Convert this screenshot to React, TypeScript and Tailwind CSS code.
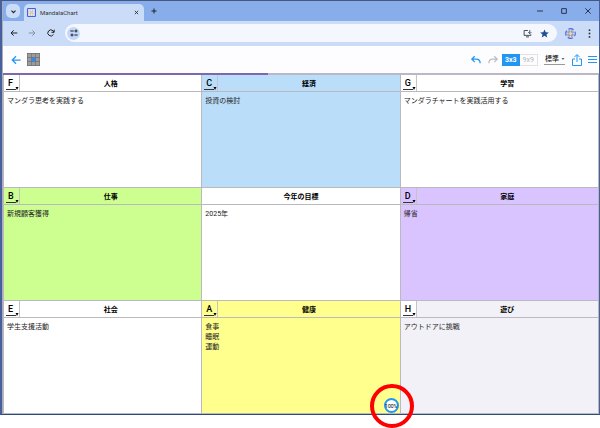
import React from "react";

type Area = {
  letter?: string;
  title: string;
  lines: string[];
  color: string;
  letterColor?: string;
  progress?: string;
};

const LETTERS = ["A", "B", "C", "D", "E", "F", "G", "H"];

const AREAS: Area[] = [
  { letter: "F", title: "人格", lines: ["マンダラ思考を実践する"], color: "bg-white" },
  { letter: "C", title: "経済", lines: ["投資の検討"], color: "bg-[#badefa]" },
  { letter: "G", title: "学習", lines: ["マンダラチャートを実践活用する"], color: "bg-white" },
  { letter: "B", title: "仕事", lines: ["新規顧客獲得"], color: "bg-[#ccff90]" },
  { title: "今年の目標", lines: ["2025年"], color: "bg-white" },
  { letter: "D", title: "家庭", lines: ["帰省"], color: "bg-[#d9c4ff]" },
  { letter: "E", title: "社会", lines: ["学生支援活動"], color: "bg-white" },
  { letter: "A", title: "健康", lines: ["食事", "睡眠", "運動"], color: "bg-[#ffff8d]", progress: "100%" },
  { letter: "H", title: "遊び", lines: ["アウトドアに挑戦"], color: "bg-[#f2f1f8]", letterColor: "bg-white" },
];

type IconProps = { d: string; className: string; width?: number };

function Icon({ d, className, width = 2 }: IconProps) {
  return (
    <svg viewBox="0 0 24 24" fill="none" stroke="currentColor" strokeWidth={width} className={className} aria-hidden="true">
      <path d={d} />
    </svg>
  );
}

function MandalaLogo({ className }: { className: string }) {
  return (
    <svg viewBox="0 0 24 24" className={className} aria-hidden="true">
      <rect x="0" y="0" width="24" height="24" rx="3" fill="#4263e6" />
      <rect x="3" y="3" width="18" height="18" fill="#f2efe9" />
      <path d="M9 3v18M15 3v18M3 9h18M3 15h18" stroke="#b9b4b4" strokeWidth="1.5" />
      <rect x="9.5" y="9.5" width="5" height="5" fill="#e6c9a8" />
    </svg>
  );
}

function TabStrip() {
  return (
    <div className="flex h-5 items-end bg-[#87aeeb]">
      <button aria-label="タブを検索" className="mb-[3px] ml-[3px] flex h-[14px] w-[14px] items-center justify-center rounded-[5px] bg-[#cbdcf8] text-[#222]">
        <Icon d="M5 9l7 7 7-7" className="h-[7px] w-[7px]" width={4} />
      </button>
      <div className="ml-1 flex h-[17px] w-[120px] items-center rounded-t-[5px] bg-[#cbdcf8] pr-1 pl-[3px]">
        <MandalaLogo className="h-[9px] w-[9px]" />
        <span className="ml-1 flex-1 text-[6px] leading-[10px] text-[#333]">MandalaChart</span>
        <button aria-label="タブを閉じる" className="flex h-2 w-2 items-center justify-center text-[#222]">
          <Icon d="M4 4l16 16M20 4L4 20" className="h-[5px] w-[5px]" width={4} />
        </button>
      </div>
      <button aria-label="新しいタブ" className="mb-[6px] ml-[6px] flex h-2 w-2 items-center justify-center text-[#222]">
        <Icon d="M12 2v20M2 12h20" className="h-[6px] w-[6px]" width={4} />
      </button>
      <div className="mb-[6px] ml-auto flex items-center gap-4 pr-[7px] text-[#26344f]">
        <button aria-label="最小化" className="h-2 w-2">
          <Icon d="M3 12h18" className="h-2 w-2" width={3} />
        </button>
        <button aria-label="最大化" className="h-2 w-2">
          <Icon d="M5 5h14v14H5z" className="h-2 w-2" width={3} />
        </button>
        <button aria-label="閉じる" className="h-2 w-2">
          <Icon d="M4 4l16 16M20 4L4 20" className="h-2 w-2" width={3} />
        </button>
      </div>
    </div>
  );
}

function AddressRow() {
  return (
    <div className="flex items-center bg-[#cbdcf8] pt-[3px] pb-1 pl-[7px] text-[#222]">
      <button aria-label="戻る">
        <Icon d="M22 12H4M11 4l-8 8 8 8" className="h-2 w-2" width={3} />
      </button>
      <button aria-label="進む" className="ml-[10px] text-[#8492ad]">
        <Icon d="M2 12h18M13 4l8 8-8 8" className="h-2 w-2" width={3} />
      </button>
      <button aria-label="再読み込み" className="ml-[11px]">
        <Icon d="M19.5 16A9 9 0 1 1 18 5.500L21 9M21.500 2v8h-8" className="h-2 w-2" width={3} />
      </button>
      <div className="ml-[10px] flex h-[18px] flex-1 items-center rounded-full bg-[#f4f8fe] pr-2 pl-[2px]">
        <button aria-label="サイト情報" className="flex h-[13px] w-[13px] items-center justify-center rounded-full bg-[#c3d8f9]">
          <Icon d="M1 6h10M23 18H13M15 6a3 3 0 1 0 6 0a3 3 0 1 0-6 0M3 18a3 3 0 1 0 6 0a3 3 0 1 0-6 0" className="h-2 w-2" width={3} />
        </button>
        <input aria-label="アドレスバー" className="mx-1 h-3 min-w-0 flex-1 bg-transparent text-[7px] outline-none" />
        <button aria-label="インストール" className="text-[#3b4455]">
          <Icon d="M13 4H3v13h18v-3M8 21h8M18 3v9M14 8.500l4 4 4-4" className="h-[9px] w-[9px]" width={2.5} />
        </button>
        <button aria-label="ブックマーク" className="ml-2 text-[#1f4e93]">
          <svg viewBox="0 0 24 24" fill="currentColor" className="h-[9px] w-[9px]" aria-hidden="true">
            <path d="M12 1l3.300 7.500 8.200.7-6.200 5.400 1.900 8L12 18.300 4.800 22.600l1.900-8L.5 9.200l8.200-.7z" />
          </svg>
        </button>
      </div>
      <button aria-label="プロフィール" className="ml-2">
        <svg viewBox="0 0 24 24" className="h-[11px] w-[11px]" aria-hidden="true">
          <circle cx="12" cy="12" r="10" fill="#d3d5dc" />
          <path d="M9 4v16M15 4v16M4 9h16M4 15h16" stroke="#777a84" strokeWidth="1.500" />
          <rect x="9.500" y="9.500" width="5" height="5" fill="#f3e2cc" />
          <circle cx="12" cy="12" r="10.500" fill="none" stroke="#4468ec" strokeWidth="2.500" strokeDasharray="12 4.500" strokeDashoffset="6" />
        </svg>
      </button>
      <button aria-label="メニュー" className="mr-[5px] ml-2 flex w-[10px] justify-center text-[#333]">
        <svg viewBox="0 0 24 24" fill="currentColor" className="h-[9px] w-[9px]" aria-hidden="true">
          <circle cx="12" cy="3" r="2.500" />
          <circle cx="12" cy="12" r="2.500" />
          <circle cx="12" cy="21" r="2.500" />
        </svg>
      </button>
    </div>
  );
}

function AppBar() {
  return (
    <header className="flex h-[27px] items-center bg-[#fdfdff] pr-[2px] pl-2">
      <button aria-label="前の画面" className="text-[#2196f3]">
        <Icon d="M23 12H3M12 3l-9 9 9 9" className="h-[10px] w-[10px]" width={3} />
      </button>
      <button aria-label="マンダラ" className="ml-[6px]">
        <svg viewBox="0 0 39 39" className="h-[13px] w-[13px]" aria-hidden="true">
          <rect width="39" height="39" fill="#707070" />
          <path d="M2 2h10v10H2zM14 2h11v10H14zM27 2h10v10H27zM2 14h10v11H2zM27 14h10v11H27zM2 27h10v10H2zM14 27h11v10H14zM27 27h10v10H27z" fill="#9c9c9c" />
          <rect x="13" y="13" width="13" height="13" fill="#3f87d8" />
        </svg>
      </button>
      <div className="ml-auto flex items-center">
        <button aria-label="元に戻す" className="text-[#2196f3]">
          <Icon d="M9 3L2 10l7 7M2 10h11q9 0 9 10" className="h-[10px] w-[10px]" width={3} />
        </button>
        <button aria-label="やり直す" className="ml-[7px] text-[#bdbdbd]">
          <Icon d="M15 3l7 7-7 7M22 10H11q-9 0-9 10" className="h-[10px] w-[10px]" width={3} />
        </button>
        <div className="ml-1 flex h-3 w-9 text-[7px] leading-[12px]">
          <button className="flex-1 bg-[#2196f3] font-bold text-white">3x3</button>
          <button className="flex-1 border border-l-0 border-[#e2e2e2] leading-[10px] text-[#b5b5b5]">9x9</button>
        </div>
        <div className="relative ml-[6px] w-[21px]">
          <select aria-label="表示" className="block h-[11px] w-full appearance-none border-b border-[#999] bg-transparent pl-[1px] text-[7px] leading-[10px] font-medium text-[#222]">
            <option>標準</option>
          </select>
          <svg viewBox="0 0 6 4" className="pointer-events-none absolute top-1 right-0 h-[2px] w-[4px]" aria-hidden="true">
            <path d="M0 0h6L3 4z" fill="#666" />
          </svg>
        </div>
        <button aria-label="共有" className="ml-[6px] text-[#2196f3]">
          <Icon d="M8 10H3v13h18V10h-5M12 16V2M7 6l5-5 5 5" className="h-3 w-3" />
        </button>
        <button aria-label="メニュー" className="ml-[5px] text-[#2196f3]">
          <Icon d="M0 4h24M0 12h24M0 20h24" className="h-[9px] w-[9px]" width={3} />
        </button>
      </div>
    </header>
  );
}

function LetterSelect({ letter, color }: { letter: string; color: string }) {
  return (
    <div className={`relative w-4 shrink-0 border-r border-[#c3c3c8] pl-[2px] ${color}`}>
      <select
        aria-label="順番"
        defaultValue={letter}
        className="block h-[15px] w-[10px] appearance-none border-b border-[#333] bg-transparent pt-[2px] pl-[2px] text-[9px] leading-[12px] font-medium text-black"
      >
        {LETTERS.map((l) => (
          <option key={l}>{l}</option>
        ))}
      </select>
      <svg viewBox="0 0 4 4" className="pointer-events-none absolute right-0 bottom-[1px] h-[3px] w-[4px]" aria-hidden="true">
        <path d="M0 0h4L2 4z" fill="#000" />
      </svg>
    </div>
  );
}

function AreaCell({ area }: { area: Area }) {
  return (
    <section className={`relative border-t border-r border-[#b9b9bf] ${area.color} ${area.progress ? "z-10" : ""}`}>
      <div className="flex h-[17px] border-b border-[#b9b9bf]">
        {area.letter && <LetterSelect letter={area.letter} color={area.letterColor ?? area.color} />}
        <h2 className="flex-1 text-center text-[7px] leading-[18px] font-bold text-black">{area.title}</h2>
      </div>
      <div className="min-h-[95px] px-[3px] pt-1 text-[7px] leading-[10px] text-[#222]">
        {area.lines.map((line) => (
          <p key={line}>{line}</p>
        ))}
      </div>
      {area.progress && (
        <div className="absolute right-[1px] bottom-0 flex h-[15px] w-[15px] items-center justify-center rounded-full border-2 border-[#2196f3] bg-white">
          <span className="text-[5px] leading-[6px] text-black">{area.progress}</span>
          <span className="absolute -top-4 -left-4 h-[44px] w-[44px] rounded-full border-4 border-[#fe0000]" />
        </div>
      )}
    </section>
  );
}

export default function App() {
  return (
    <div className="min-h-screen bg-white [font-family:Roboto,'Noto_Sans_CJK_JP',sans-serif]">
      <div className="border-t border-r border-b border-l-2 border-t-[#47557f] border-r-[#47609c] border-b-[#2f4a7d] border-l-[#47609c]">
        <div className="border-l border-[#a9adbd]">
          <TabStrip />
          <AddressRow />
          <AppBar />
          <div className="relative z-10 -mb-px h-[2px] bg-[#bdb6c6]">
            <div className="h-full w-[44.5%] bg-[#7d67ae]" />
          </div>
          <main className="grid grid-cols-3 border-b border-l border-[#b9b9bf]">
            {AREAS.map((area) => (
              <AreaCell key={area.title} area={area} />
            ))}
          </main>
        </div>
      </div>
    </div>
  );
}
